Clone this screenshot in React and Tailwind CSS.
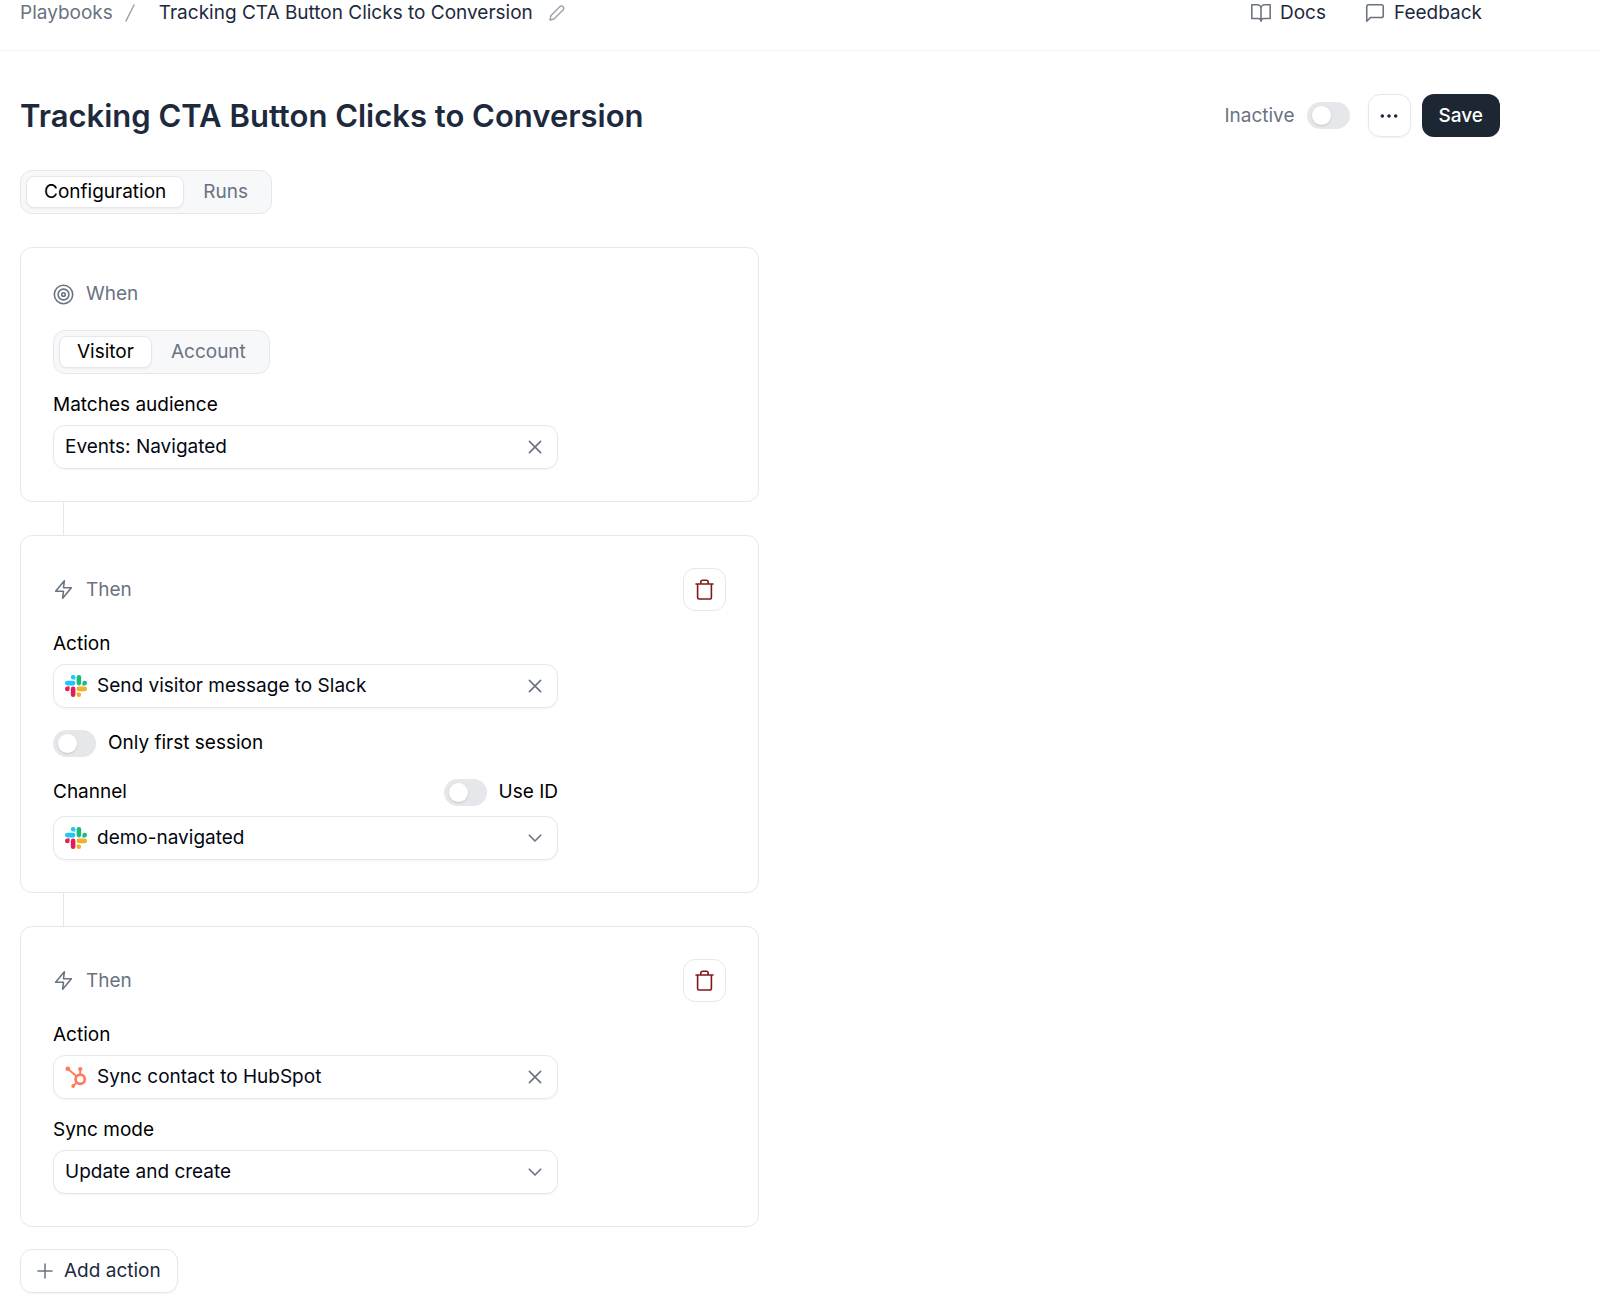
import React, { useState } from 'react';

const stroke = {
  fill: 'none',
  stroke: 'currentColor',
  strokeLinecap: 'round',
  strokeLinejoin: 'round',
};

const BookIcon = () => (
  <svg className="size-[22px] text-gray-500" viewBox="0 0 24 24" {...stroke} strokeWidth="1.7">
    <path d="M2 3h6a4 4 0 0 1 4 4v14a3 3 0 0 0-3-3H2zM22 3h-6a4 4 0 0 0-4 4v14a3 3 0 0 1 3-3h7z" />
  </svg>
);

const ChatIcon = () => (
  <svg className="size-[22px] text-gray-500" viewBox="0 0 24 24" {...stroke} strokeWidth="1.7">
    <path d="M21 15a2 2 0 0 1-2 2H7l-4 4V5a2 2 0 0 1 2-2h14a2 2 0 0 1 2 2z" />
  </svg>
);

const SlashIcon = () => (
  <svg className="h-[18px] w-2.5 text-gray-400" viewBox="0 0 10 18" {...stroke} strokeWidth="1.5">
    <path d="M9 1L1 17" />
  </svg>
);

const PencilIcon = () => (
  <svg className="size-4 text-gray-400" viewBox="0 0 16 16" {...stroke} strokeWidth="1.4">
    <path d="M1 15l.8-4.2L11 1.600a1.900 1.900 0 0 1 2.700 0l.5.5a1.900 1.900 0 0 1 0 2.700L5 14z" />
  </svg>
);

const TargetIcon = () => (
  <svg className="size-[21px]" viewBox="0 0 21 21" {...stroke} strokeWidth="1.6">
    <circle cx="10.5" cy="10.5" r="9.2" />
    <circle cx="10.5" cy="10.5" r="5.4" />
    <circle cx="10.5" cy="10.5" r="1.8" />
  </svg>
);

const BoltIcon = () => (
  <svg className="size-[21px]" viewBox="0 0 24 24" {...stroke} strokeWidth="1.8">
    <path d="M13 2L3 14h9l-1 8 10-12h-9l1-8z" />
  </svg>
);

const TrashIcon = () => (
  <svg className="size-[21px]" viewBox="0 0 21 21" {...stroke} strokeWidth="1.6">
    <path d="M2 5h17M3.600 5v13.500a1.500 1.500 0 0 0 1.500 1.500h10.800a1.500 1.500 0 0 0 1.500-1.500V5M6.800 5V3.200a2 2 0 0 1 2-2h3.400a2 2 0 0 1 2 2V5" />
  </svg>
);

const CloseIcon = () => (
  <svg className="size-4" viewBox="0 0 16 16" {...stroke} strokeWidth="1.6">
    <path d="M2.400 2.400l11.200 11.200M13.600 2.400L2.400 13.600" />
  </svg>
);

const ChevronIcon = () => (
  <svg className="size-4" viewBox="0 0 16 16" {...stroke} strokeWidth="1.6">
    <path d="M2.300 5.200L8 11l5.700-5.800" />
  </svg>
);

const PlusIcon = () => (
  <svg className="size-4 text-gray-500" viewBox="0 0 16 16" {...stroke} strokeWidth="1.5">
    <path d="M8 1v14M1 8h14" />
  </svg>
);

const SlackIcon = () => (
  <svg className="size-[22px]" viewBox="0 0 24 24">
    <path fill="#E01E5A" d="M5.042 15.165a2.528 2.528 0 0 1-2.520 2.523A2.528 2.528 0 0 1 0 15.165a2.527 2.527 0 0 1 2.522-2.520h2.520v2.520zM6.313 15.165a2.527 2.527 0 0 1 2.521-2.520 2.527 2.527 0 0 1 2.521 2.520v6.313A2.528 2.528 0 0 1 8.834 24a2.528 2.528 0 0 1-2.521-2.522v-6.313z" />
    <path fill="#1EC8F6" d="M8.834 5.042a2.528 2.528 0 0 1-2.521-2.520A2.528 2.528 0 0 1 8.834 0a2.528 2.528 0 0 1 2.521 2.522v2.520H8.834zM8.834 6.313a2.528 2.528 0 0 1 2.521 2.521 2.528 2.528 0 0 1-2.521 2.521H2.522A2.528 2.528 0 0 1 0 8.834a2.528 2.528 0 0 1 2.522-2.521h6.312z" />
    <path fill="#1DB87B" d="M18.956 8.834a2.528 2.528 0 0 1 2.522-2.521A2.528 2.528 0 0 1 24 8.834a2.528 2.528 0 0 1-2.522 2.521h-2.522V8.834zM17.688 8.834a2.528 2.528 0 0 1-2.523 2.521 2.527 2.527 0 0 1-2.520-2.521V2.522A2.527 2.527 0 0 1 15.165 0a2.528 2.528 0 0 1 2.523 2.522v6.312z" />
    <path fill="#ECB22E" d="M15.165 18.956a2.528 2.528 0 0 1 2.523 2.522A2.528 2.528 0 0 1 15.165 24a2.527 2.527 0 0 1-2.520-2.522v-2.522h2.520zM15.165 17.688a2.527 2.527 0 0 1-2.520-2.523 2.526 2.526 0 0 1 2.520-2.520h6.313A2.527 2.527 0 0 1 24 15.165a2.528 2.528 0 0 1-2.522 2.523h-6.313z" />
  </svg>
);

const HubSpotIcon = () => (
  <svg className="size-[22px]" viewBox="0 0 22 22" fill="none" stroke="#FF7A59">
    <circle cx="15.2" cy="13.2" r="4.6" strokeWidth="2.7" />
    <path strokeWidth="1.9" d="M15.200 8.500V3M11.500 10.200L3 3M11.800 16.600L8.200 19.800" />
    <circle cx="2.8" cy="2.8" r="2.3" fill="#FF7A59" stroke="none" />
    <circle cx="15.2" cy="3" r="2.1" fill="#FF7A59" stroke="none" />
    <circle cx="8.2" cy="20" r="1.9" fill="#FF7A59" stroke="none" />
  </svg>
);

const Toggle = ({ id }) => (
  <input
    id={id}
    type="checkbox"
    role="switch"
    className="h-[27px] w-[43px] shrink-0 cursor-pointer appearance-none rounded-full bg-gray-200 px-[5px] py-1 before:block before:size-[19px] before:rounded-full before:bg-white before:shadow-sm checked:bg-gray-800 checked:before:translate-x-3.5"
  />
);

const Tabs = ({ items }) => {
  const [active, setActive] = useState(items[0]);

  return (
    <div role="tablist" className="flex h-11 w-fit items-center gap-px rounded-xl border border-gray-200 bg-[#f6f8fa] px-[5px]">
      {items.map(item => (
        <button
          key={item}
          type="button"
          role="tab"
          aria-selected={item === active}
          onClick={() => setActive(item)}
          className={
            item === active
              ? 'flex h-8 items-center rounded-lg border border-gray-200 bg-white px-[17px] text-black shadow-xs'
              : 'flex h-8 items-center rounded-lg border border-transparent px-[17px] text-gray-500'
          }
        >
          {item}
        </button>
      ))}
    </div>
  );
};

const ClearableField = ({ id, label, icon, initial }) => {
  const [value, setValue] = useState(initial);

  return (
    <div className="flex flex-col gap-1.5">
      <label htmlFor={id} className="text-black">{label}</label>
      <div className="flex h-11 items-center gap-2.5 rounded-xl border border-gray-200 px-[11px] shadow-xs">
        {icon}
        <input
          id={id}
          type="text"
          value={value}
          onChange={e => setValue(e.target.value)}
          className="min-w-0 flex-1 text-gray-950 outline-none"
        />
        <button type="button" aria-label="Clear" onClick={() => setValue('')} className="px-[3px] text-gray-500">
          <CloseIcon />
        </button>
      </div>
    </div>
  );
};

const SelectBox = ({ id, icon, options }) => (
  <div className="relative">
    {icon && <span className="pointer-events-none absolute inset-y-0 left-3 flex items-center">{icon}</span>}
    <select
      id={id}
      className={`h-11 w-full appearance-none rounded-xl border border-gray-200 bg-white pr-10 text-gray-950 shadow-xs ${icon ? 'pl-[43px]' : 'pl-[11px]'}`}
    >
      {options.map(option => (
        <option key={option}>{option}</option>
      ))}
    </select>
    <span className="pointer-events-none absolute inset-y-0 right-[15px] flex items-center text-gray-500">
      <ChevronIcon />
    </span>
  </div>
);

const StepCard = ({ icon, title, removable, children }) => (
  <section className="rounded-xl border border-gray-200 p-8">
    <div className="flex items-center justify-between">
      <h2 className="flex items-center gap-3 text-gray-500">
        {icon}
        {title}
      </h2>
      {removable && (
        <button
          type="button"
          aria-label="Delete action"
          className="flex size-[43px] items-center justify-center rounded-xl border border-gray-200 text-red-900"
        >
          <TrashIcon />
        </button>
      )}
    </div>
    <div className="max-w-[505px]">{children}</div>
  </section>
);

const Connector = () => <div className="ml-[43px] h-[33px] w-px bg-gray-200" />;

const App = () => {
  return (
    <div className="min-h-screen bg-white font-['Inter',sans-serif] text-[19px] leading-7 text-slate-800">
      <header className="border-b border-gray-100">
        <div className="flex max-w-[1520px] items-start justify-between px-5 pb-6 leading-[26px]">
          <nav className="flex items-center">
            <a href="#" className="mr-3 text-gray-500">Playbooks</a>
            <SlashIcon />
            <span className="ml-6">Tracking CTA Button Clicks to Conversion</span>
            <button type="button" aria-label="Rename" className="ml-4">
              <PencilIcon />
            </button>
          </nav>
          <div className="flex items-center gap-[38px] pr-[18px]">
            <a href="#" className="flex items-center gap-2">
              <BookIcon />
              Docs
            </a>
            <a href="#" className="flex items-center gap-2">
              <ChatIcon />
              Feedback
            </a>
          </div>
        </div>
      </header>

      <main className="max-w-[1520px] px-5 pt-[43px]">
        <div className="flex items-center justify-between">
          <h1 className="text-[31px] leading-10 font-semibold">
            Tracking CTA Button Clicks to Conversion
          </h1>
          <div className="flex items-center">
            <label htmlFor="active" className="text-gray-500">Inactive</label>
            <div className="mr-[18px] ml-3 flex">
              <Toggle id="active" />
            </div>
            <button
              type="button"
              aria-label="More options"
              className="mr-[11px] flex size-[43px] items-center justify-center rounded-xl border border-gray-200 shadow-xs"
            >
              <svg className="w-5" viewBox="0 0 20 4" fill="currentColor">
                <circle cx="3.3" cy="2" r="1.8" />
                <circle cx="10" cy="2" r="1.8" />
                <circle cx="16.7" cy="2" r="1.8" />
              </svg>
            </button>
            <button type="button" className="h-[43px] rounded-xl bg-[#1c2733] px-[17px] font-medium text-white">
              Save
            </button>
          </div>
        </div>

        <div className="mt-[33px]">
          <Tabs items={['Configuration', 'Runs']} />
        </div>

        <div className="mt-[33px] max-w-[739px]">
          <StepCard icon={<TargetIcon />} title="When">
            <div className="mt-[22px] mb-[17px]">
              <Tabs items={['Visitor', 'Account']} />
            </div>
            <ClearableField id="audience" label="Matches audience" initial="Events: Navigated" />
          </StepCard>

          <Connector />

          <StepCard icon={<BoltIcon />} title="Then" removable>
            <div className="mt-[19px]">
              <ClearableField
                id="slack-action"
                label="Action"
                icon={<SlackIcon />}
                initial="Send visitor message to Slack"
              />
            </div>
            <div className="mt-[21px] flex items-center gap-3 text-black">
              <Toggle id="first-session" />
              <label htmlFor="first-session">Only first session</label>
            </div>
            <div className="mt-[21px] mb-2.5 flex items-center justify-between text-black">
              <label htmlFor="channel">Channel</label>
              <div className="flex items-center gap-3">
                <Toggle id="use-id" />
                <label htmlFor="use-id">Use ID</label>
              </div>
            </div>
            <SelectBox id="channel" icon={<SlackIcon />} options={['demo-navigated']} />
          </StepCard>

          <Connector />

          <StepCard icon={<BoltIcon />} title="Then" removable>
            <div className="mt-[19px] mb-[17px]">
              <ClearableField
                id="hubspot-action"
                label="Action"
                icon={<HubSpotIcon />}
                initial="Sync contact to HubSpot"
              />
            </div>
            <div className="flex flex-col gap-1.5">
              <label htmlFor="sync-mode" className="text-black">Sync mode</label>
              <SelectBox id="sync-mode" options={['Update and create']} />
            </div>
          </StepCard>
        </div>

        <button
          type="button"
          className="mt-[22px] flex h-11 items-center gap-[11px] rounded-xl border border-gray-200 px-4 shadow-xs"
        >
          <PlusIcon />
          Add action
        </button>
      </main>
    </div>
  );
};

export default App;
